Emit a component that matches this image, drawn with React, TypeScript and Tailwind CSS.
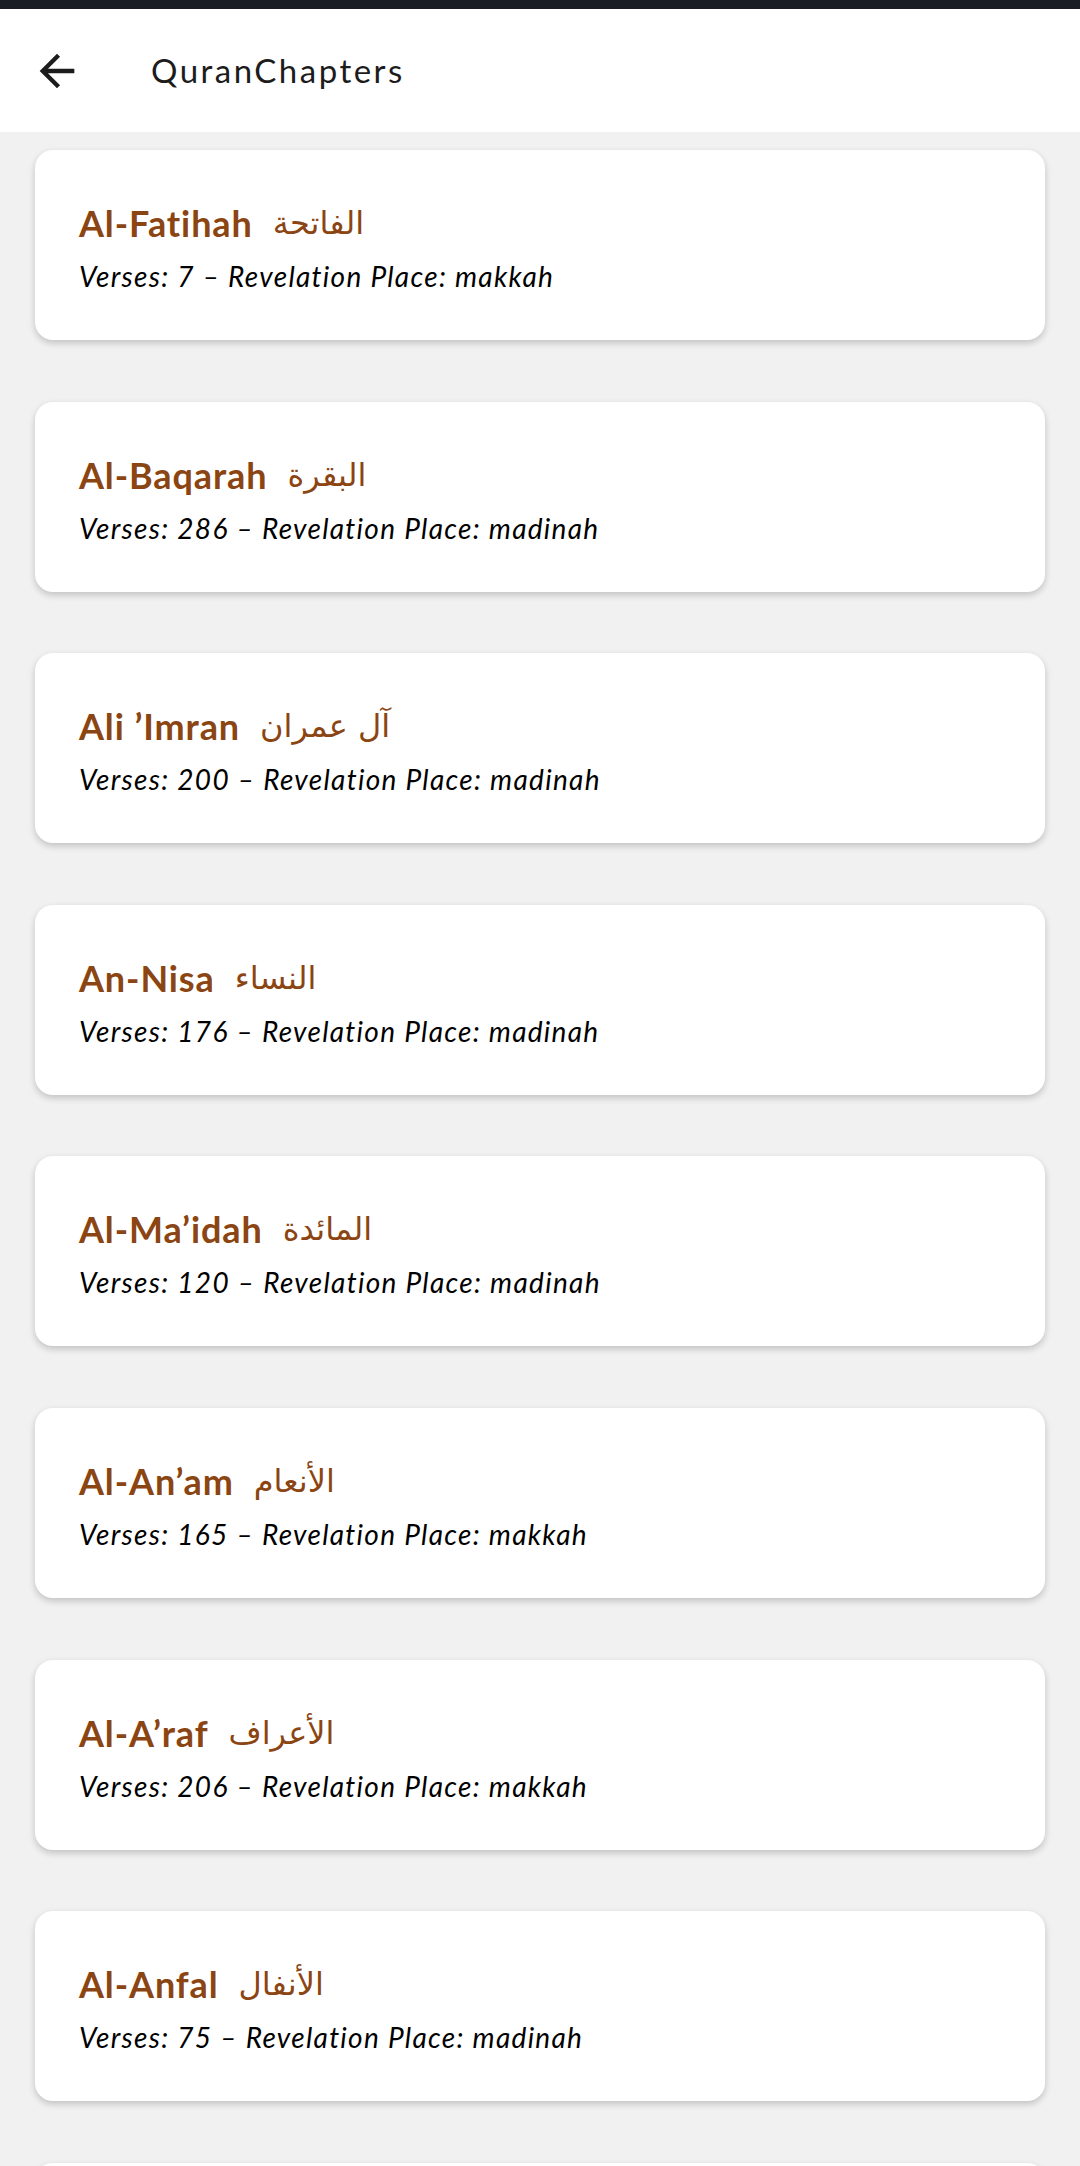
const chapters = [
  { name: "Al-Fatihah", arabic: "الفاتحة", verses: 7, place: "makkah" },
  { name: "Al-Baqarah", arabic: "البقرة", verses: 286, place: "madinah" },
  { name: "Ali ’Imran", arabic: "آل عمران", verses: 200, place: "madinah" },
  { name: "An-Nisa", arabic: "النساء", verses: 176, place: "madinah" },
  { name: "Al-Ma’idah", arabic: "المائدة", verses: 120, place: "madinah" },
  { name: "Al-An’am", arabic: "الأنعام", verses: 165, place: "makkah" },
  { name: "Al-A’raf", arabic: "الأعراف", verses: 206, place: "makkah" },
  { name: "Al-Anfal", arabic: "الأنفال", verses: 75, place: "madinah" },
];

const ChapterCard = ({
  name,
  arabic,
  verses,
  place,
}: {
  name: string;
  arabic: string;
  verses: number;
  place: string;
}) => {
  return (
    <div className="h-[190px] shrink-0 rounded-[18px] bg-white pl-[44px] pt-[51px] shadow-[0_3px_7px_rgba(0,0,0,0.2)]">
      <div className="flex items-center gap-[20px] text-[#8b4513] leading-[44px]">
        <span className="font-['Lato',sans-serif] text-[36px] font-bold tracking-[0.9px]">
          {name}
        </span>
        <span
          dir="rtl"
          className="font-['DejaVu_Sans','Noto_Sans',sans-serif] text-[32px] font-normal"
        >
          {arabic}
        </span>
      </div>
      <div className="mt-[11px] font-['Lato',sans-serif] text-[28px] italic leading-[40px] tracking-[1.3px] text-black">
        Verses: {verses} – Revelation Place: {place}
      </div>
    </div>
  );
};

const App = () => {
  return (
    <div className="h-[2166px] w-full overflow-hidden bg-[#f1f1f1]">
      <div className="h-[9px] w-full bg-[#1a1d24]" />
      <header className="relative z-10 flex h-[123px] items-center bg-white">
        <button className="ml-[31px] flex h-[52px] w-[52px] items-center justify-center">
          <svg viewBox="0 0 24 24" className="h-[52px] w-[52px]" fill="#1c1c1c">
            <path d="M20 11H7.83l5.59-5.59L12 4l-8 8 8 8 1.41-1.41L7.83 13H20v-2z" />
          </svg>
        </button>
        <div className="ml-[68px] font-['Lato',sans-serif] text-[33px] tracking-[2.5px] text-[#1c1c1c]">
          QuranChapters
        </div>
      </header>
      <main className="flex flex-col gap-[61.6px] px-[35px] pt-[18px]">
        {chapters.map((c) => (
          <ChapterCard key={c.name} {...c} />
        ))}
        <div className="h-[190px] shrink-0 rounded-[18px] bg-white shadow-[0_3px_7px_rgba(0,0,0,0.2)]" />
      </main>
    </div>
  );
};

export default App;
